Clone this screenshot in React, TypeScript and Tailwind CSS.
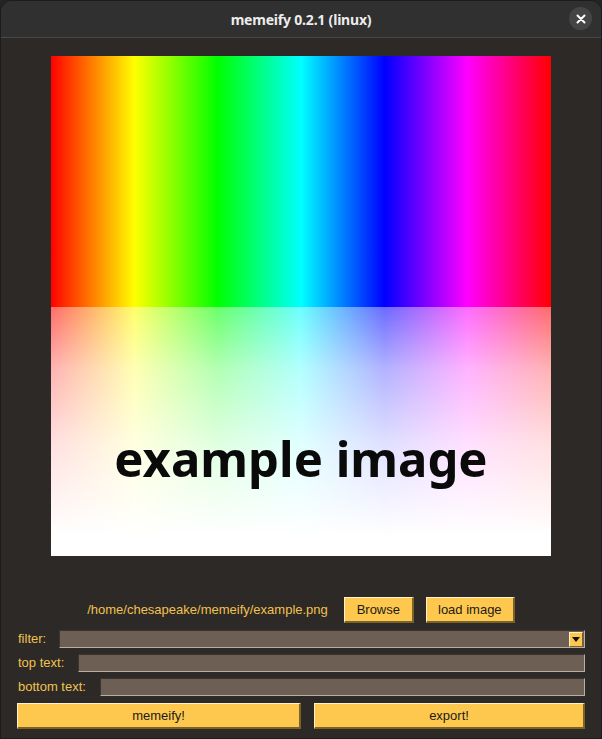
import React from 'react';

const Field = ({ children }: { children?: React.ReactNode }) => (
  <div className="flex-1 h-[18px] bg-[#6e5f54] border-t border-l border-t-[#3b342f] border-l-[#3b342f] border-b border-r border-b-[#b9aea6] border-r-[#b9aea6] flex justify-end items-center pr-px">
    {children}
  </div>
);

const TkButton = ({ label, className }: { label: string; className?: string }) => (
  <button
    className={
      'h-[26px] bg-[#fec84f] text-[#1c1a17] text-[13px] border-t border-l border-t-[#fff3cf] border-l-[#fff3cf] border-b-2 border-r-2 border-b-[#7a6229] border-r-[#7a6229] leading-none ' +
      (className ?? '')
    }
  >
    {label}
  </button>
);

export default function App() {
  return (
    <div className="w-[602px] h-[739px] bg-[#242424]">
      <div className="w-full h-full rounded-t-[12px] overflow-hidden border border-[#1c1c1c] bg-[#2d2926] flex flex-col font-['Liberation_Sans',Arial,sans-serif]">
        {/* title bar */}
        <div className="h-[37px] shrink-0 bg-[#303030] border-b border-[#4a4846] relative flex items-center justify-center">
          <span className="text-[#ececec] text-[14px] font-bold font-['Noto_Sans',sans-serif] tracking-[-0.2px]">
            memeify 0.2.1 (linux)
          </span>
          <div className="absolute right-[9px] top-[6px] w-[23px] h-[23px] rounded-full bg-[#454545] flex items-center justify-center">
            <svg width="10" height="10" viewBox="0 0 10 10">
              <path d="M1.5 1.5 L8.5 8.5 M8.5 1.5 L1.5 8.5" stroke="#ffffff" strokeWidth="2" strokeLinecap="round" />
            </svg>
          </div>
        </div>

        {/* preview */}
        <div className="flex justify-center pt-[18px]">
          <div className="w-[500px] h-[500px] flex flex-col relative">
            <div className="h-[251px] bg-[image:linear-gradient(to_right,#ff0000_0%,#ffff00_16.7%,#00ff00_33.3%,#00ffff_50%,#0000ff_66.7%,#ff00ff_83.3%,#ff0000_100%)]" />
            <div className="flex-1 bg-[image:linear-gradient(to_bottom,rgba(255,255,255,0.42)_0%,rgba(255,255,255,0.7)_25%,rgba(255,255,255,0.88)_55%,rgba(255,255,255,1)_92%),linear-gradient(to_right,#ff0000_0%,#ffff00_16.7%,#00ff00_33.3%,#00ffff_50%,#0000ff_66.7%,#ff00ff_83.3%,#ff0000_100%)]" />
            <div className="absolute left-0 right-0 top-[378px] text-center text-[49px] font-bold text-[#0a0a0a] font-['Noto_Sans',sans-serif] leading-none">
              example image
            </div>
          </div>
        </div>

        {/* file row */}
        <div className="flex items-center justify-center gap-3 mt-[41px] text-[13px]">
          <span className="text-[#f0c250] mr-1">/home/chesapeake/memeify/example.png</span>
          <TkButton label="Browse" className="w-[70px]" />
          <TkButton label="load image" className="w-[89px]" />
        </div>

        {/* options */}
        <div className="flex flex-col gap-[6px] mt-[7px] px-[16px] text-[13px] leading-[18px] text-[#f0c250]">
          <div className="flex items-center gap-[13px] pl-[1px]">
            <span>filter:</span>
            <Field>
              <div className="w-[14px] h-[15px] bg-[#fec84f] border-t border-l border-[#fff3cf] border-b border-r border-b-[#7a6229] border-r-[#7a6229] flex items-center justify-center">
                <svg width="8" height="5" viewBox="0 0 8 5">
                  <path d="M0 0 L8 0 L4 5 Z" fill="#111" />
                </svg>
              </div>
            </Field>
          </div>
          <div className="flex items-center gap-[14px] pl-[1px]">
            <span>top text:</span>
            <Field />
          </div>
          <div className="flex items-center gap-[14px] pl-[1px]">
            <span>bottom text:</span>
            <Field />
          </div>
          <div className="flex gap-[13px] mt-[1px]">
            <TkButton label="memeify!" className="flex-1" />
            <TkButton label="export!" className="w-[271px]" />
          </div>
        </div>
      </div>
    </div>
  );
}
